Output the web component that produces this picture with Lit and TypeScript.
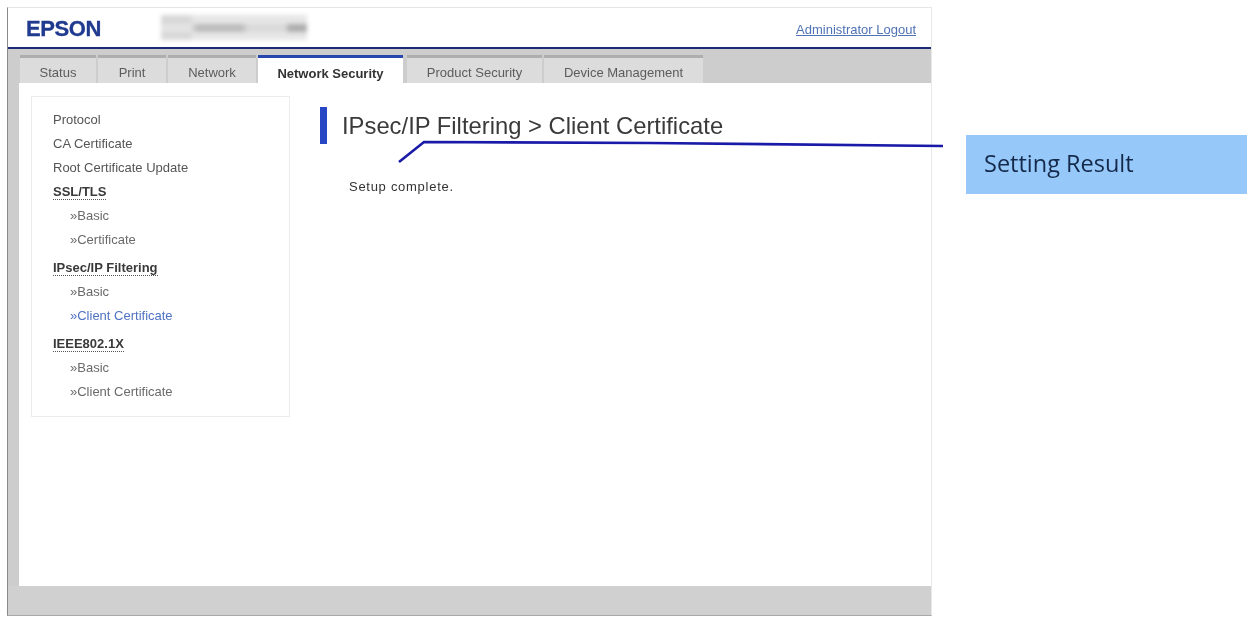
import { LitElement, html, css } from "lit";
import { customElement } from "lit/decorators.js";

const tabs = [
  { label: "Status", w: 76 },
  { label: "Print", w: 68 },
  { label: "Network", w: 88 },
  { label: "Network Security", w: 145, active: true },
  { label: "Product Security", w: 135, gap: 2 },
  { label: "Device Management", w: 159 },
];

const side = [
  { t: "Protocol", c: "top" },
  { t: "CA Certificate", c: "top" },
  { t: "Root Certificate Update", c: "top" },
  { t: "SSL/TLS", c: "group" },
  { t: "»Basic", c: "sub" },
  { t: "»Certificate", c: "sub" },
  { t: "IPsec/IP Filtering", c: "group spaced" },
  { t: "»Basic", c: "sub" },
  { t: "»Client Certificate", c: "sub cur" },
  { t: "IEEE802.1X", c: "group spaced" },
  { t: "»Basic", c: "sub" },
  { t: "»Client Certificate", c: "sub" },
];

@customElement("app-root")
export class AppRoot extends LitElement {
  static styles = css`
    :host {
      display: block;
      position: relative;
      width: 1251px;
      height: 617px;
      overflow: hidden;
      background: #fff;
      font-family: "Liberation Sans", Arial, sans-serif;
      color: #444;
    }
    .stage { display: flex; align-items: flex-start; height: 100%; }
    .window {
      margin: 7px 0 0 7px;
      width: 925px;
      height: 609px;
      box-sizing: border-box;
      display: flex;
      flex-direction: column;
      border-top: 1px solid #e6e6e6;
      border-left: 1px solid #8a8a8a;
      border-right: 1px solid #e8e8e8;
      border-bottom: 1px solid #a8a8a8;
    }
    .head {
      box-sizing: border-box;
      height: 41px;
      flex: none;
      display: flex;
      align-items: center;
      padding: 2px 15px 0 18px;
      border-bottom: 2px solid #1c2a72;
    }
    .logo {
      font: bold 22px "Liberation Sans", Arial, sans-serif;
      color: #1f3a8f;
      letter-spacing: -0.4px;
      width: 135px;
      -webkit-text-stroke: 0.3px #1f3a8f;
      filter: blur(0.4px);
    }
    .smudge {
      width: 146px;
      height: 25px;
      margin-top: -3px;
      display: flex;
      flex-direction: column;
      filter: blur(2.2px);
      background: linear-gradient(90deg, #d8d8d8 0 20%, #e6e6e6 22% 100%);
    }
    .smudge i { display: block; margin-top: 9px; height: 8px; background: linear-gradient(90deg, #e4e4e4 0 20%, #bcbcbc 25% 55%, #dadada 60% 85%, #aeaeae 88% 100%); }
    .logout {
      margin-left: auto;
      padding-top: 2px;
      font-size: 13px;
      color: #4f72b4;
      text-decoration: underline;
      filter: blur(0.55px);
    }
    .tabs {
      height: 34px;
      flex: none;
      box-sizing: border-box;
      padding: 6px 0 0 12px;
      background: #cdcdcd;
      display: flex;
      gap: 2px;
    }
    .tab {
      box-sizing: border-box;
      height: 28px;
      flex: none;
      border-top: 3px solid #aeaeae;
      background: #dcdcdc;
      font-size: 13px;
      color: #5c5c5c;
      display: flex;
      align-items: center;
      justify-content: center;
      padding-top: 3px;
      filter: blur(0.55px);
    }
    .tab.active {
      background: #fff;
      border-top-color: #2747ad;
      color: #333;
      font-weight: bold;
      padding-top: 5px;
    }
    .body { flex: 1; display: flex; min-height: 0; }
    .rail { width: 11px; flex: none; background: #cdcdcd; }
    .content { flex: 1; display: flex; padding: 13px 0 0 12px; min-width: 0; }
    .side {
      box-sizing: border-box;
      width: 259px;
      height: 321px;
      flex: none;
      border: 1px solid #ececec;
      padding: 10.5px 0 0 21px;
      font-size: 13px;
      filter: blur(0.55px);
    }
    .item { height: 24.2px; line-height: 24px; white-space: nowrap; color: #555; }
    .item.sub { padding-left: 17px; color: #6a6a6a; }
    .item.cur { color: #4f72c2; }
    .item.group { color: #3a3a3a; font-weight: bold; }
    .item.spaced { margin-top: 3.3px; }
    .item.group span { border-bottom: 1px dotted #555; }
    .main { padding: 11px 0 0 30px; flex: 1; min-width: 0; }
    .title {
      display: flex;
      align-items: center;
      gap: 15px;
      font-size: 23.8px;
      line-height: 37px;
      color: #3a3a3a;
      white-space: nowrap;
      filter: blur(0.45px);
    }
    .title::before { content: ""; width: 7px; height: 37px; background: #2747c4; flex: none; }
    .msg { margin: 35px 0 0 29px; font-size: 13px; letter-spacing: 0.72px; color: #333; filter: blur(0.45px); }
    .foot { height: 29px; flex: none; background: #d0d0d0; }
    .callout {
      margin: 135px 0 0 34px;
      box-sizing: border-box;
      width: 281px;
      height: 59px;
      flex: none;
      background: #97c8fa;
      color: #152a4a;
      font: 23.5px "Open Sans", sans-serif;
      display: flex;
      align-items: center;
      padding: 0 0 4px 18px;
      white-space: nowrap;
      filter: blur(0.3px);
    }
    svg.line { position: absolute; left: 0; top: 0; pointer-events: none; }
  `;

  render() {
    return html`
      <div class="stage">
        <div class="window">
          <div class="head">
            <div class="logo">EPSON</div>
            <div class="smudge"><i></i></div>
            <div class="logout">Administrator Logout</div>
          </div>
          <div class="tabs">
            ${tabs.map(
              (t) => html`<div
                class="tab ${t.active ? "active" : ""}"
                style="width:${t.w}px;${t.gap ? `margin-left:${t.gap}px` : ""}"
              >${t.label}</div>`
            )}
          </div>
          <div class="body">
            <div class="rail"></div>
            <div class="content">
              <div class="side">
                ${side.map(
                  (s) => html`<div class="item ${s.c}">${s.c.startsWith("group") ? html`<span>${s.t}</span>` : s.t}</div>`
                )}
              </div>
              <div class="main">
                <div class="title">IPsec/IP Filtering &gt; Client Certificate</div>
                <div class="msg">Setup complete.</div>
              </div>
            </div>
          </div>
          <div class="foot"></div>
        </div>
        <div class="callout">Setting Result</div>
      </div>
      <svg class="line" width="1251" height="617" viewBox="0 0 1251 617">
        <path d="M399 162 L424 142 L650 143 L943 146" fill="none" stroke="#1a1aa8" stroke-width="2.6" />
      </svg>
    `;
  }
}
